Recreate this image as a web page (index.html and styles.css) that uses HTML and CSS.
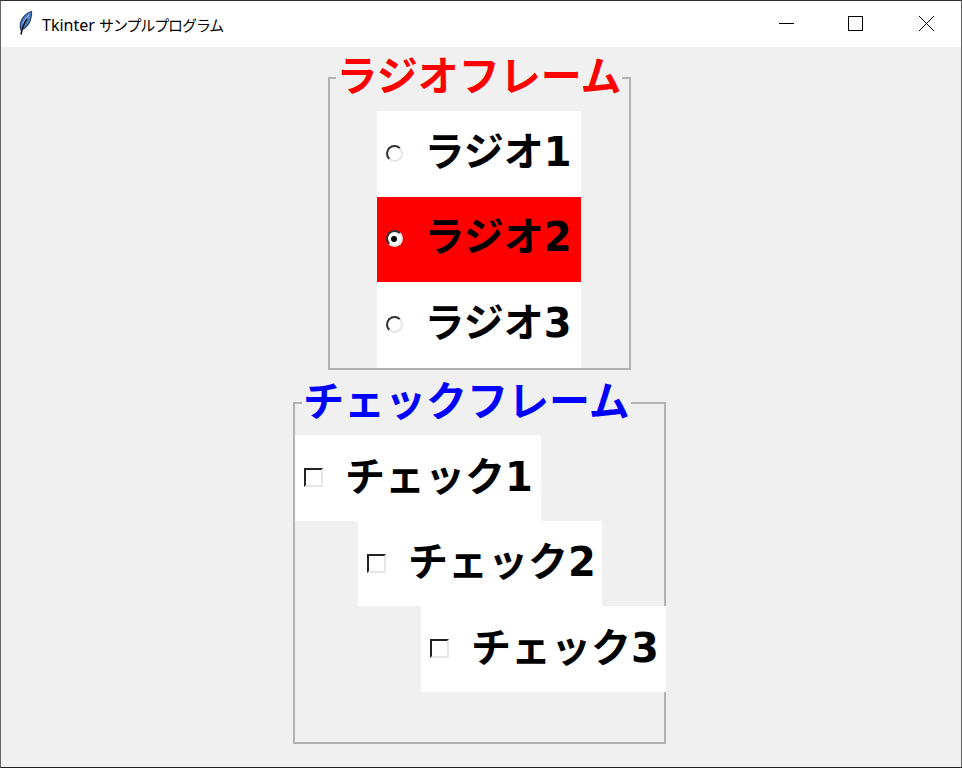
FILE: index.html
```html
<!DOCTYPE html>
<html lang="ja">
<head>
<meta charset="utf-8">
<title>Tkinter サンプルプログラム</title>
<link rel="stylesheet" href="styles.css">
</head>
<body>
<div class="window">
  <header class="titlebar">
    <svg class="app-icon" width="16" height="26" viewBox="0 0 16 26">
      <path d="M14.500 1.500C10 2.500 5 7 3.500 13c-.5 2.500-.3 5 .5 7C8 18.500 12 15 13.500 9.500 14.300 7 15 4 14.500 1.500z" fill="#4f82c8" stroke="#27426e" stroke-width="1.200"/>
      <path d="M12 5C9 8 7 11 6 14" fill="none" stroke="#a9c6ea" stroke-width="1"/>
      <path d="M10 9C7 13 5.500 17 4 24.500" fill="none" stroke="#15151f" stroke-width="1.600"/>
    </svg>
    <span class="title">Tkinter <span class="title-kana">サンプルプログラム</span></span>
    <div class="controls">
      <svg class="control" width="70" height="46" viewBox="0 0 70 46"><path d="M28 22.500H43" stroke="#000" fill="none"/></svg>
      <svg class="control" width="70" height="46" viewBox="0 0 70 46"><rect x="27.500" y="15.500" width="14" height="14" stroke="#000" fill="none"/></svg>
      <svg class="control" width="70" height="46" viewBox="0 0 70 46"><path d="M28 15L43 30M43 15L28 30" stroke="#000" fill="none"/></svg>
    </div>
  </header>
  <main class="content">
    <fieldset class="frame frame-radio">
      <legend class="frame-label label-red">ラジオフレーム</legend>
      <div class="radio-list">
        <div class="option"><span class="radio"></span><span class="option-text">ラジオ1</span></div>
        <div class="option option-selected"><span class="radio radio-on"></span><span class="option-text">ラジオ2</span></div>
        <div class="option"><span class="radio"></span><span class="option-text">ラジオ3</span></div>
      </div>
    </fieldset>
    <fieldset class="frame frame-check">
      <legend class="frame-label label-blue">チェックフレーム</legend>
      <div class="check-list">
        <div class="option check-option"><span class="check"></span><span class="option-text check-text">チェック1</span></div>
        <div class="option check-option indent-1"><span class="check"></span><span class="option-text check-text">チェック2</span></div>
        <div class="option check-option indent-2"><span class="check"></span><span class="option-text check-text">チェック3</span></div>
      </div>
    </fieldset>
  </main>
</div>
</body>
</html>
```
FILE: styles.css
```css
* { box-sizing: border-box; }
html, body { margin: 0; padding: 0; }
body { width: 962px; height: 768px; overflow: hidden; font-family: "DejaVu Sans", "Noto Sans CJK JP", sans-serif; }
.window {
  width: 962px; height: 768px; display: flex; flex-direction: column;
  background: #f0f0f0;
  border-top: 1px solid #333; border-left: 1px solid #666; border-right: 1px solid #666; border-bottom: 1px solid #222;
}
.titlebar { height: 46px; flex: none; background: #fff; display: flex; align-items: center; padding-left: 16px; }
.app-icon { flex: none; margin-top: -2px; }
.title { margin-left: 9px; font-family: "Noto Sans", "Noto Sans CJK JP", sans-serif; font-size: 16px; color: #000; white-space: nowrap; padding-top: 1px; }
.title-kana { font-family: "Noto Sans CJK JP", sans-serif; font-size: 15px; letter-spacing: -1.100px; }
.controls { margin-left: auto; display: flex; }
.control { display: block; }
.content { flex: 1; display: flex; flex-direction: column; align-items: center; padding-right: 4px; }
.frame { margin: 0; padding: 0; border: 2px solid #b2b2b2; min-width: 0; flex: none; }
.frame-radio { width: 303px; height: 323px; }
.frame-check { width: 373px; height: 372px; margin: 2px 0 0 1px; }
.frame-label { height: 62px; padding: 0 1px; margin-left: 6px; font-weight: 700; font-size: 41px; line-height: 60px; white-space: nowrap; }
.frame-check .frame-label { margin-left: 7px; }
.label-red { color: #f00; }
.label-blue { color: #00f; }
.radio-list { display: flex; flex-direction: column; width: 204px; margin: 2px 0 0 47px; }
.check-list { display: flex; flex-direction: column; align-items: flex-start; margin-top: 1px; }
.option { height: 85.500px; background: #fff; display: flex; align-items: center; padding-left: 9px; }
.option-selected { background: #f00; }
.check-option { width: 246px; }
.indent-1 { margin-left: 63px; width: 244px; }
.indent-2 { margin-left: 126px; width: 245px; }
.option-text { font-weight: 700; font-size: 40px; line-height: 1; color: #000; white-space: nowrap; margin-left: 22px; position: relative; top: -2px; }
.check-text { top: -1px; }
.radio {
  width: 17px; height: 17px; border-radius: 50%; flex: none; background: #fff;
  border: 2px solid; border-color: #333 #e6e6e6 #e6e6e6 #333; margin-top: -1px;
}
.radio-on { position: relative; }
.radio-on::after { content: ""; position: absolute; left: 3.500px; top: 3.500px; width: 6px; height: 6px; border-radius: 50%; background: #000; }
.check {
  width: 19px; height: 19px; flex: none; background: #fff;
  border: 2px solid; border-color: #222 #e6e6e6 #e6e6e6 #222;
}
```
